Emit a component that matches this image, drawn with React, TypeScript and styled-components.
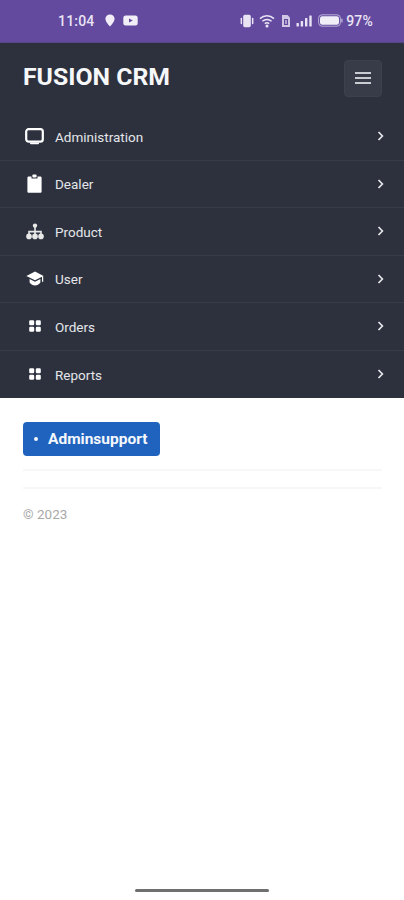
import React from "react";
import styled, { createGlobalStyle } from "styled-components";

const GlobalStyle = createGlobalStyle`
  html, body { margin: 0; padding: 0; background: #fff; }
  * { box-sizing: border-box; }
  body { font-family: Roboto, "Liberation Sans", sans-serif; }
`;

const Page = styled.div`
  width: 404px;
  height: 900px;
  overflow: hidden;
  display: flex;
  flex-direction: column;
  background: #fff;
`;

const StatusBar = styled.div`
  height: 43px;
  flex: none;
  background: #634a9f;
  color: #e9e4f4;
  display: flex;
  align-items: center;
  justify-content: space-between;
  padding: 0 31px 1px 58px;
  border-bottom: 1px solid #55468a;
`;

const StatusGroup = styled.div`
  display: flex;
  align-items: center;
  gap: ${(props: { $gap: number }) => props.$gap + "px"};
`;

const StatusText = styled.span`
  font-size: 14px;
  font-weight: 500;
  letter-spacing: 0.2px;
`;

const Time = styled(StatusText)`
  margin-right: 2px;
`;

const Battery = styled(StatusText)`
  margin-left: -2px;
`;

const Nav = styled.nav`
  flex: none;
  background: #2d313e;
  height: 355px;
  display: flex;
  flex-direction: column;
`;

const Header = styled.div`
  height: 70px;
  flex: none;
  display: flex;
  align-items: center;
  justify-content: space-between;
  padding: 0 22px 0 23px;
`;

const Brand = styled.div`
  color: #f6f7f8;
  font-size: 24.8px;
  font-weight: 700;
  margin-bottom: 4px;
`;

const Toggler = styled.button`
  width: 38px;
  height: 37px;
  padding: 0;
  background: #373c48;
  border: 1px solid #3c414d;
  border-radius: 4px;
  display: flex;
  flex-direction: column;
  align-items: center;
  justify-content: center;
  gap: 3px;
`;

const TogglerLine = styled.span`
  width: 16px;
  height: 2px;
  background: #c9ccd0;
`;

const Row = styled.div`
  height: 47.5px;
  flex: none;
  display: flex;
  align-items: center;
  padding: 0 20px 0 25px;
  border-bottom: 1px solid #383c49;
  &:last-child { border-bottom: none; }
`;

const RowIcon = styled.div`
  width: 19px;
  height: 20px;
  flex: none;
  margin-right: 11px;
  display: flex;
  align-items: center;
  justify-content: center;
  color: #fff;
`;

const RowLabel = styled.span`
  flex: 1;
  padding-top: 1px;
  color: #e4e6e9;
  font-size: 13.5px;
  font-weight: 400;
`;

const Content = styled.div`
  flex: 1;
  display: flex;
  flex-direction: column;
  padding: 24px 22px 0 23px;
`;

const Pill = styled.div`
  width: 137px;
  height: 34px;
  background: #1f63bf;
  border-radius: 4px;
  color: #f4f7fc;
  display: flex;
  align-items: center;
  padding: 0 0 1px 11px;
  font-size: 15.5px;
  font-weight: 700;
`;

const Dot = styled.span`
  width: 4px;
  height: 4px;
  border-radius: 50%;
  background: #f4f7fc;
  margin: 1px 10px 0 0;
`;

const Rule = styled.div`
  height: 2px;
  background: #f7f7f7;
  margin-top: ${(props: { $top: number }) => props.$top + "px"};
`;

const Copyright = styled.div`
  margin-top: 17px;
  color: #a9a9a9;
  font-size: 13.5px;
`;

const HomeBar = styled.div`
  flex: none;
  width: 134px;
  height: 3px;
  margin: 0 auto 8px;
  background: #6f6f6f;
  border-radius: 2px;
`;

const Monitor = () => (
  <svg width="19" height="17" viewBox="0 0 19 17" fill="none">
    <rect x="1.2" y="1.2" width="16.6" height="12.4" rx="2.4" stroke="#fff" strokeWidth="2.2" />
    <rect x="5" y="14.6" width="9" height="1.6" rx="0.8" fill="#fff" />
  </svg>
);

const Clipboard = () => (
  <svg width="15" height="19" viewBox="0 0 15 19">
    <path
      fill="#fff"
      d="M1.8 2.4H4.5V4.6H10.5V2.4H13.2C14.1 2.4 14.6 3 14.6 3.8V17.4C14.6 18.3 14.1 18.8 13.2 18.8H1.8C0.9 18.8 0.4 18.3 0.4 17.4V3.8C0.4 3 0.9 2.4 1.8 2.4Z"
    />
    <rect x="5.4" y="0.6" width="4.2" height="3" rx="0.8" fill="#fff" />
  </svg>
);

const Sitemap = () => (
  <svg width="18" height="17" viewBox="0 0 18 17" fill="none">
    <circle cx="9" cy="2.6" r="2.2" fill="#e8e8e8" />
    <path d="M9 4V13M3 13V8.6H15V13" stroke="#e8e8e8" strokeWidth="1.6" />
    <circle cx="3" cy="13.4" r="2.8" fill="#e8e8e8" />
    <circle cx="9" cy="13.4" r="2.8" fill="#e8e8e8" />
    <circle cx="15" cy="13.4" r="2.8" fill="#e8e8e8" />
  </svg>
);

const GradCap = () => (
  <svg width="18" height="15" viewBox="0 0 18 15">
    <path fill="#fff" d="M9 0.6L17.6 5L9 9.2L0.4 5Z" />
    <path fill="#fff" d="M3.6 8L9 10.7L14.4 8V11.6C13 13.6 11 14.4 9 14.4C7 14.4 5 13.6 3.6 11.6Z" />
    <rect x="16" y="5.4" width="1.2" height="5.4" fill="#fff" />
  </svg>
);

const Grid = () => (
  <svg width="14" height="14" viewBox="0 0 14 14" fill="#fff">
    <rect x="1.2" y="1.2" width="5" height="5" rx="1.2" />
    <rect x="7.8" y="1.2" width="5" height="5" rx="1.2" />
    <rect x="1.2" y="7.8" width="5" height="5" rx="1.2" />
    <rect x="7.8" y="7.8" width="5" height="5" rx="1.2" />
  </svg>
);

const Chevron = () => (
  <svg width="7" height="10" viewBox="0 0 7 10" fill="none">
    <path d="M1.5 1L5.4 5L1.5 9" stroke="#e6e7ea" strokeWidth="1.7" />
  </svg>
);

const items = [
  { label: "Administration", icon: <Monitor /> },
  { label: "Dealer", icon: <Clipboard /> },
  { label: "Product", icon: <Sitemap /> },
  { label: "User", icon: <GradCap /> },
  { label: "Orders", icon: <Grid /> },
  { label: "Reports", icon: <Grid /> },
];

const App = () => (
  <Page>
    <GlobalStyle />
    <StatusBar>
      <StatusGroup $gap={8}>
        <Time>11:04</Time>
        <svg width="10" height="13" viewBox="0 0 10 13" fill="#f1eef8">
          <path d="M5 0.4C7.6 0.4 9.6 2.3 9.6 4.8C9.6 7.6 6.6 10.6 5 12.6C3.4 10.6 0.4 7.6 0.4 4.8C0.4 2.3 2.4 0.4 5 0.4Z" />
        </svg>
        <svg width="15" height="11" viewBox="0 0 15 11">
          <rect x="0.3" y="0.5" width="14.4" height="10" rx="2.5" fill="#f1eef8" />
          <path d="M6 3.4L9.8 5.5L6 7.6Z" fill="#634a9f" />
        </svg>
      </StatusGroup>
      <StatusGroup $gap={5}>
        <svg width="14" height="14" viewBox="0 0 14 14" fill="#e9e4f4">
          <rect x="3.2" y="0.8" width="7.6" height="12.4" rx="1.6" />
          <rect x="0.6" y="3.8" width="1.5" height="6.4" rx="0.7" />
          <rect x="11.9" y="3.8" width="1.5" height="6.4" rx="0.7" />
        </svg>
        <svg width="17" height="14" viewBox="0 0 17 14" fill="none" stroke="#e9e4f4" strokeWidth="1.5">
          <path d="M1 4.6C5 0.8 11 0.8 15 4.6" />
          <path d="M3.4 7.2C6 4.8 10 4.8 12.6 7.2" />
          <path d="M5.8 9.7C7.2 8.6 8.8 8.6 10.2 9.7" />
          <circle cx="8" cy="12" r="0.8" fill="#e9e4f4" />
        </svg>
        <svg width="10" height="14" viewBox="0 0 10 14">
          <path d="M1 1H6.5L9 3.5V13H1Z" fill="#cfc7e4" />
          <rect x="3" y="5" width="4" height="6" fill="#634a9f" />
          <rect x="4.3" y="6" width="1.4" height="4" fill="#cfc7e4" />
        </svg>
        <svg width="17" height="12" viewBox="0 0 17 12" fill="#e9e4f4">
          <rect x="0.5" y="8" width="2.4" height="3.6" rx="0.6" />
          <rect x="4.7" y="6" width="2.4" height="5.6" rx="0.6" />
          <rect x="9" y="3" width="2.4" height="8.6" rx="0.6" />
          <rect x="13.3" y="0.4" width="2.4" height="11.2" rx="0.6" />
        </svg>
        <svg width="25" height="13" viewBox="0 0 25 13">
          <rect x="0.6" y="0.8" width="21.8" height="11.4" rx="3.4" fill="none" stroke="#b8add6" strokeWidth="1" />
          <rect x="2" y="2.2" width="19" height="8.6" rx="2.2" fill="#f1eef8" />
          <rect x="23.2" y="4.4" width="1.4" height="4.2" rx="0.7" fill="#b8add6" />
        </svg>
        <Battery>97%</Battery>
      </StatusGroup>
    </StatusBar>
    <Nav>
      <Header>
        <Brand>FUSION CRM</Brand>
        <Toggler aria-label="menu">
          <TogglerLine />
          <TogglerLine />
          <TogglerLine />
        </Toggler>
      </Header>
      {items.map((item) => (
        <Row key={item.label}>
          <RowIcon>{item.icon}</RowIcon>
          <RowLabel>{item.label}</RowLabel>
          <Chevron />
        </Row>
      ))}
    </Nav>
    <Content>
      <Pill>
        <Dot />
        Adminsupport
      </Pill>
      <Rule $top={13} />
      <Rule $top={16} />
      <Copyright>© 2023</Copyright>
    </Content>
    <HomeBar />
  </Page>
);

export default App;
